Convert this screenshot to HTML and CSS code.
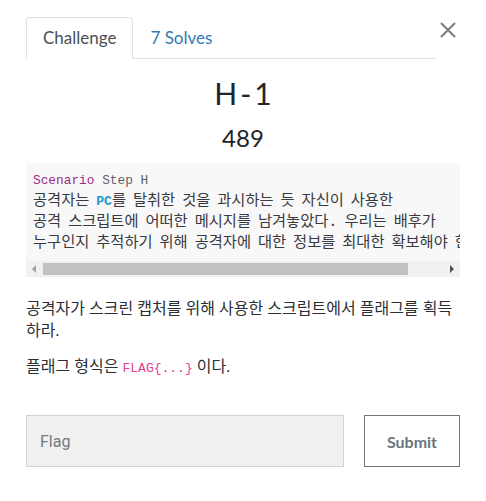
FILE: index.html
```html
<!DOCTYPE html>
<html lang="ko">
<head>
    <meta charset="UTF-8">
    <meta name="viewport" content="width=device-width, initial-scale=1.0">
    <title>H-1</title>
    <link rel="stylesheet" href="styles.css">
</head>
<body>
    <div class="modal-body">
        <!-- 탭 + 닫기 -->
        <div class="header-row">
            <ul class="nav-tabs">
                <li class="nav-item active">Challenge</li>
                <li class="nav-item solves">7 Solves</li>
            </ul>
            <button class="close-btn" type="button" aria-label="Close">
                <svg width="16" height="16" viewBox="0 0 16 16">
                    <path d="M1 1 L15 15 M15 1 L1 15" stroke="#7d7d7d" stroke-width="2" fill="none"/>
                </svg>
            </button>
        </div>

        <h2 class="challenge-name">H-1</h2>
        <h3 class="challenge-value">489</h3>

        <div class="code-box">
            <pre class="code"><span class="head"><span class="kw">Scenario</span> <span class="muted">Step H</span></span>
공격자는 <span class="lit">PC</span>를 탈취한 것을 과시하는 듯 자신이 사용한
공격 스크립트에 어떠한 메시지를 남겨놓았다. 우리는 배후가
누구인지 추적하기 위해 공격자에 대한 정보를 최대한 확보해야 한다.</pre>
            <div class="scrollbar">
                <span class="arrow left"></span>
                <div class="track"><div class="thumb"></div></div>
                <span class="arrow right"></span>
            </div>
        </div>

        <p class="desc">공격자가 스크린 캡처를 위해 사용한 스크립트에서 플래그를 획득하라.</p>
        <p class="desc">플래그 형식은 <code>FLAG{...}</code> 이다.</p>

        <form class="submit-row" id="flagForm">
            <input type="text" class="flag-input" placeholder="Flag">
            <button type="submit" class="submit-btn">Submit</button>
        </form>
    </div>
    <script>
        document.getElementById('flagForm').addEventListener('submit', function(e) {
            e.preventDefault();
        });
    </script>
</body>
</html>
```

FILE: styles.css
```css
* {
    margin: 0;
    padding: 0;
    box-sizing: border-box;
}
body {
    font-family: 'Lato', 'Noto Sans CJK KR', sans-serif;
    background-color: #fff;
    color: #212529;
}
.modal-body {
    padding: 17px 26px 0 26px;
}
.header-row {
    display: flex;
}
.nav-tabs {
    flex: 1;
    display: flex;
    list-style: none;
    border-bottom: 1px solid #dee2e6;
}
.nav-item {
    font-size: 17px;
    line-height: 24px;
    padding: 8px 16px;
    border: 1px solid transparent;
    border-top-left-radius: 4px;
    border-top-right-radius: 4px;
    margin-bottom: -1px;
}
.nav-item.active {
    color: #495057;
    border-color: #dee2e6 #dee2e6 #fff;
    background: #fff;
}
.nav-item.solves {
    color: #337ab7;
}
.close-btn {
    width: 24px;
    height: 41px;
    border: none;
    background: none;
    display: flex;
    justify-content: center;
    padding-top: 5px;
    cursor: pointer;
}
.challenge-name {
    font-size: 30px;
    font-weight: normal;
    line-height: 36px;
    letter-spacing: 3px;
    text-indent: 3px;
    text-align: center;
    color: #212529;
    margin-top: 16px;
}
.challenge-value {
    font-size: 24px;
    font-weight: normal;
    line-height: 29px;
    text-align: center;
    color: #212529;
    margin-top: 12px;
}
.code-box {
    margin-top: 11px;
    background: #f8f8f8;
}
/* 한글 폭을 맞추기 위해 본문은 크게, 영문 줄은 작게 */
.code {
    font-family: 'Liberation Mono', 'Noto Sans CJK KR', monospace;
    font-size: 15.3px;
    word-spacing: -2.2px;
    line-height: 21px;
    padding: 7px;
    color: #383a42;
    white-space: pre;
    overflow: hidden;
}
.code .head {
    font-size: 12.8px;
    word-spacing: 0;
}
.code .kw {
    color: #a0288c;
}
.code .muted {
    color: #5c5f66;
}
.code .lit {
    font-size: 13px;
    color: #2496cf;
    font-weight: bold;
}
.scrollbar {
    display: flex;
    height: 16px;
    background: #f1f1f1;
}
.arrow {
    width: 16px;
    display: flex;
    align-items: center;
    justify-content: center;
}
.arrow::before {
    content: '';
    width: 0;
    height: 0;
    border-top: 4px solid transparent;
    border-bottom: 4px solid transparent;
}
.arrow.left::before {
    border-right: 4px solid #a3a3a3;
}
.arrow.right::before {
    border-left: 4px solid #505050;
}
.track {
    flex: 1;
    padding: 2px 36px 2px 1px;
}
.thumb {
    height: 100%;
    background: #c1c1c1;
}
.desc {
    font-size: 16px;
    line-height: 22px;
    color: #2b2f33;
    margin-top: 20px;
}
.desc + .desc {
    margin-top: 14px;
}
.desc code {
    font-family: 'Liberation Mono', monospace;
    font-size: 13px;
    color: #e83e8c;
}
.submit-row {
    display: flex;
    gap: 20px;
    margin-top: 35px;
}
.flag-input {
    width: 318px;
    height: 52px;
    padding: 0 13px;
    border: 1px solid #ced4da;
    background: #f0f0f0;
    font-family: 'Roboto', 'Liberation Sans', sans-serif;
    font-size: 16px;
    color: #495057;
    outline: none;
}
.flag-input::placeholder {
    color: #757b80;
}
.submit-btn {
    width: 96px;
    height: 52px;
    border: 1px solid #6c757d;
    background: #fff;
    color: #6c757d;
    font-family: 'Lato', sans-serif;
    font-size: 16px;
    font-weight: bold;
    cursor: pointer;
}
```
